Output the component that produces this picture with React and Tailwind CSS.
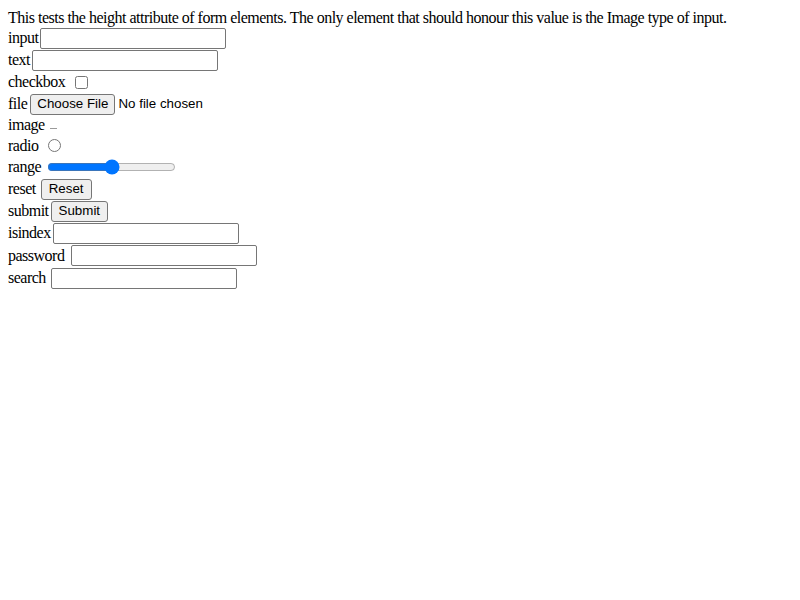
import React from "react";

const box = "h-[21px] w-[186px] border border-[#767676] rounded-[2px] bg-white px-[2px] text-[13px] tracking-normal";
const btn = "h-[21px] px-[7px] border border-[#767676] rounded-[3px] bg-[#efefef] text-[13.33px] font-['Liberation_Sans',Arial,sans-serif] text-black leading-none tracking-normal";

function Row({ label, children, h = "h-[22px]", gap = "gap-[3px]" }) {
  return (
    <div className={`flex items-center ${gap} ${h}`}>
      <span>{label}</span>
      {children}
    </div>
  );
}

export default function App() {
  return (
    <div className="p-2 text-[16px] tracking-[-0.5px] text-black bg-white min-h-screen font-['Liberation_Serif','Times_New_Roman',serif]">
      <p className="h-[19px] leading-[19px] whitespace-nowrap">
        This tests the height attribute of form elements. The only element that should honour this value is the Image type of input.
      </p>
      <Row label="input" gap="gap-[2px]"><input className={box} /></Row>
      <Row label="text" gap="gap-[2px]"><input type="text" className={box} /></Row>
      <Row label="checkbox" gap="gap-[6px]">
        <input type="checkbox" className="ml-[4px] w-[13px] h-[13px]" />
      </Row>
      <Row label="file">
        <button className="h-[21px] px-[6px] border border-[#767676] rounded-[3px] bg-[#efefef] text-[13.33px] font-['Liberation_Sans',Arial,sans-serif] text-black leading-none tracking-normal">Choose File</button>
        <span className="text-[13.33px] tracking-normal font-['Liberation_Sans',Arial,sans-serif]">No file chosen</span>
      </Row>
      <Row label="image" h="h-[20px]">
        <span className="ml-[2px] mt-[6px] w-[7px] h-px bg-[#9a9a9a]" />
      </Row>
      <Row label="radio" h="h-[21px]" gap="gap-[5px]">
        <input type="radio" className="ml-[5px] w-[13px] h-[13px]" />
      </Row>
      <Row label="range" gap="gap-[4px]">
        <input type="range" defaultValue={50} className="ml-[2px] w-[129px]" />
      </Row>
      <Row label="reset" gap="gap-[5px]"><button className={btn}>Reset</button></Row>
      <Row label="submit" gap="gap-[2px]"><button className={btn}>Submit</button></Row>
      <Row label="isindex" gap="gap-[2px]"><input className={box} /></Row>
      <Row label="password" h="h-[23px]" gap="gap-[7px]"><input type="password" className={box} /></Row>
      <Row label="search" gap="gap-[5px]"><input type="search" className={box} /></Row>
    </div>
  );
}
